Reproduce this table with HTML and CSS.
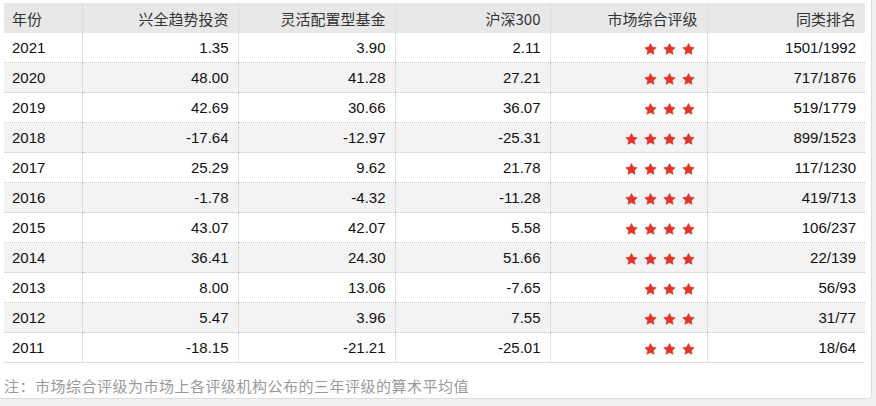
FILE: index.html
```html
<!DOCTYPE html>
<html lang="zh-CN">
<head>
<meta charset="utf-8">
<link rel="stylesheet" href="styles.css">
</head>
<body>
<div class="panel">
  <table class="perf">
    <colgroup>
      <col class="c-year"><col class="c1"><col class="c2"><col class="c3"><col class="c4"><col class="c5">
    </colgroup>
    <thead>
      <tr><th class="left">年份</th><th>兴全趋势投资</th><th>灵活配置型基金</th><th>沪深300</th><th>市场综合评级</th><th>同类排名</th></tr>
    </thead>
    <tbody>
      <tr><td class="left">2021</td><td>1.35</td><td>3.90</td><td>2.11</td><td><span class="stars s3"></span></td><td>1501/1992</td></tr>
      <tr><td class="left">2020</td><td>48.00</td><td>41.28</td><td>27.21</td><td><span class="stars s3"></span></td><td>717/1876</td></tr>
      <tr><td class="left">2019</td><td>42.69</td><td>30.66</td><td>36.07</td><td><span class="stars s3"></span></td><td>519/1779</td></tr>
      <tr><td class="left">2018</td><td>-17.64</td><td>-12.97</td><td>-25.31</td><td><span class="stars s4"></span></td><td>899/1523</td></tr>
      <tr><td class="left">2017</td><td>25.29</td><td>9.62</td><td>21.78</td><td><span class="stars s4"></span></td><td>117/1230</td></tr>
      <tr><td class="left">2016</td><td>-1.78</td><td>-4.32</td><td>-11.28</td><td><span class="stars s4"></span></td><td>419/713</td></tr>
      <tr><td class="left">2015</td><td>43.07</td><td>42.07</td><td>5.58</td><td><span class="stars s4"></span></td><td>106/237</td></tr>
      <tr><td class="left">2014</td><td>36.41</td><td>24.30</td><td>51.66</td><td><span class="stars s4"></span></td><td>22/139</td></tr>
      <tr><td class="left">2013</td><td>8.00</td><td>13.06</td><td>-7.65</td><td><span class="stars s3"></span></td><td>56/93</td></tr>
      <tr><td class="left">2012</td><td>5.47</td><td>3.96</td><td>7.55</td><td><span class="stars s3"></span></td><td>31/77</td></tr>
      <tr><td class="left">2011</td><td>-18.15</td><td>-21.21</td><td>-25.01</td><td><span class="stars s3"></span></td><td>18/64</td></tr>
    </tbody>
  </table>
  <p class="note">注：市场综合评级为市场上各评级机构公布的三年评级的算术平均值</p>
</div>
<script>
(function(){
  var star = '<svg class="star" viewBox="0 0 24 24" width="13" height="13"><path d="M12 1L15.23 7.55L22.46 8.6L17.23 13.7L18.47 20.9L12 17.5L5.53 20.9L6.77 13.7L1.54 8.6L8.77 7.55Z" fill="#e3342a" stroke="#e3342a" stroke-width="1.2" stroke-linejoin="round"/></svg>';
  document.querySelectorAll('.stars').forEach(function(el){
    var n = el.classList.contains('s4') ? 4 : 3;
    el.innerHTML = new Array(n + 1).join(star);
  });
})();
</script>
</body>
</html>
```
FILE: styles.css
```css
html, body {
  margin: 0;
  padding: 0;
}
body {
  background: #f0f0f0;
  width: 876px;
  height: 406px;
  overflow: hidden;
}
.panel {
  width: 872px;
  height: 399px;
  box-sizing: border-box;
  background: #fff;
  border-right: 1px solid #dcdcdc;
  border-bottom: 1px solid #dcdcdc;
  border-bottom-right-radius: 4px;
  padding: 3px 0 0 4px;
}
.perf {
  border-collapse: collapse;
  table-layout: fixed;
  width: 861px;
  font-family: "Liberation Sans", "Noto Sans CJK SC", Arial, sans-serif;
  font-size: 15px;
}
.c-year { width: 78px; }
.c1 { width: 156px; }
.c2 { width: 157px; }
.c3 { width: 155px; }
.c4 { width: 157px; }
.c5 { width: 158px; }
.perf th, .perf td {
  text-align: right;
  padding: 0 9px 0 8px;
  white-space: nowrap;
  border-left: 1px dotted #c8c8c8;
}
.perf th:first-child, .perf td:first-child {
  border-left: none;
}
.perf th.left, .perf td.left {
  text-align: left;
}
.perf thead th {
  height: 30px;
  background: #e8e8e8;
  color: #333;
  font-weight: normal;
  font-family: "Noto Sans CJK SC", "Liberation Sans", sans-serif;
  font-size: 15px;
  border-left-color: #d4d4d4;
}
.perf tbody td {
  height: 29px;
  color: #111;
  border-bottom: 1px dotted #c8c8c8;
}
.perf tbody tr:nth-child(even) td {
  background: #f3f3f3;
}
.perf tbody tr:last-child td {
  border-bottom: 1px solid #dedede;
}
.stars {
  display: inline-flex;
  gap: 6px;
  padding-right: 3px;
  vertical-align: middle;
}
.star { display: block; }
.note {
  margin: 13px 0 0 0;
  font-family: "Noto Sans CJK SC", sans-serif;
  font-size: 15px;
  letter-spacing: 0.5px;
  color: #9a9a9a;
  line-height: 20px;
}
```
